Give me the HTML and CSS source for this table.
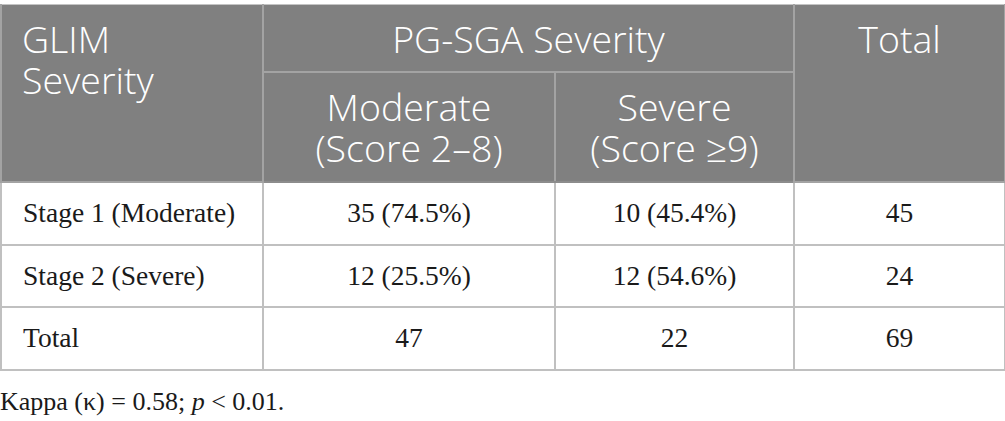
FILE: index.html
```html
<!DOCTYPE html>
<html lang="en">
<head>
<meta charset="utf-8">
<title>GLIM vs PG-SGA Severity</title>
<link rel="stylesheet" href="styles.css">
</head>
<body>
<div class="page">
  <table class="data-table">
    <colgroup>
      <col class="col-1">
      <col class="col-2">
      <col class="col-3">
      <col class="col-4">
    </colgroup>
    <thead>
      <tr>
        <th rowspan="2" class="th-left">GLIM<br>Severity</th>
        <th colspan="2" class="th-group">PG-SGA Severity</th>
        <th rowspan="2" class="th-total">Total</th>
      </tr>
      <tr>
        <th class="th-sub">Moderate<br>(Score 2–8)</th>
        <th class="th-sub">Severe<br>(Score &ge;9)</th>
      </tr>
    </thead>
    <tbody>
      <tr>
        <td class="td-label">Stage 1 (Moderate)</td>
        <td>35 (74.5%)</td>
        <td>10 (45.4%)</td>
        <td>45</td>
      </tr>
      <tr>
        <td class="td-label">Stage 2 (Severe)</td>
        <td>12 (25.5%)</td>
        <td>12 (54.6%)</td>
        <td>24</td>
      </tr>
      <tr>
        <td class="td-label">Total</td>
        <td>47</td>
        <td>22</td>
        <td>69</td>
      </tr>
    </tbody>
  </table>
  <p class="footnote">Kappa (κ) = 0.58; <i>p</i> &lt; 0.01.</p>
</div>
</body>
</html>
```

FILE: styles.css
```css
html, body {
  margin: 0;
  padding: 0;
  background: #ffffff;
}

.page {
  padding-top: 4px;
  width: 1004px;
}

.data-table {
  width: 1004px;
  border-collapse: collapse;
  table-layout: fixed;
}

.col-1 { width: 262px; }
.col-2 { width: 292px; }
.col-3 { width: 239px; }
.col-4 { width: 211px; }

.data-table th {
  background: #808080;
  color: #ffffff;
  font-family: "Open Sans", "DejaVu Sans", sans-serif;
  font-weight: 300;
  font-size: 37.5px;
  line-height: 41px;
  border: 2px solid #a3a3a3;
  border-top: 1px solid #c4c4c4;
}

.data-table thead tr:last-child th {
  border-bottom: 2px solid #8c8c8c;
  border-top: 2px solid #a3a3a3;
}

.th-left {
  text-align: left;
  vertical-align: top;
  padding: 13px 20px 0;
}

.th-group {
  text-align: center;
  vertical-align: top;
  padding: 13px 10px 12px;
  height: 41px;
}

.th-total {
  text-align: center;
  vertical-align: top;
  padding: 13px 10px 0;
}

.th-sub {
  text-align: center;
  vertical-align: middle;
  padding: 13px 10px 13px;
}

.data-table td {
  font-family: "Liberation Serif", "Times New Roman", serif;
  font-size: 27.5px;
  color: #1a1a1a;
  text-align: center;
  vertical-align: middle;
  height: 60.5px;
  padding: 0 10px;
  border: 2px solid #c0c0c0;
}

.data-table td.td-label {
  text-align: left;
  padding-left: 21px;
}

.footnote {
  margin: 16px 0 0;
  font-family: "Liberation Serif", "Times New Roman", serif;
  font-size: 26px;
  color: #1a1a1a;
}
```
